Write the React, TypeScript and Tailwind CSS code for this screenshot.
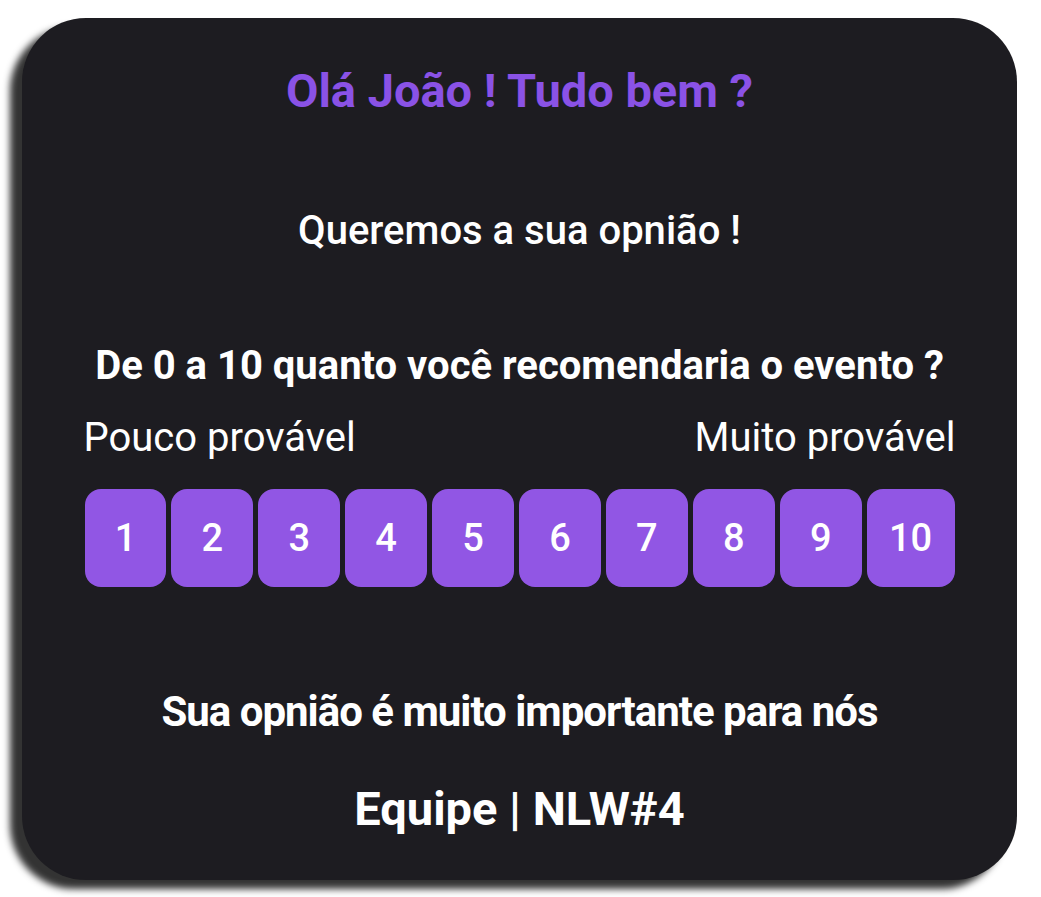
export default function App() {
  const nums = [1, 2, 3, 4, 5, 6, 7, 8, 9, 10];
  return (
    <div className="w-[1041px] h-[897px] bg-white pt-[18px] pl-[22px]" style={{ fontFamily: "Roboto, 'Liberation Sans', sans-serif" }}>
      <div className="w-[995px] h-[862px] bg-[#1d1c21] rounded-[64px] shadow-[-12px_9px_7px_#333] flex flex-col items-center text-white">
        <h1 className="mt-[45px] text-[47px] leading-[56px] font-bold text-[#8a52e6]">Olá João ! Tudo bem ?</h1>
        <p className="mt-[84px] text-[40px] leading-[56px] font-medium">Queremos a sua opnião !</p>
        <p className="mt-[79px] text-[40px] leading-[56px] font-bold">De 0 a 10 quanto você recomendaria o evento ?</p>
        <div className="mt-[16px] w-[872px] flex justify-between text-[40px] leading-[56px] font-normal">
          <span>Pouco provável</span>
          <span>Muito provável</span>
        </div>
        <div className="mt-[23px] w-[870px] flex gap-[5px]">
          {nums.map((n) => (
            <button
              key={n}
              className={`${n === 10 ? "w-[88px]" : "w-[82px]"} h-[98px] rounded-[16px] bg-[#9156e4] text-white text-[38px] font-medium flex items-center justify-center`}
            >
              {n}
            </button>
          ))}
        </div>
        <p className="mt-[97px] text-[42px] leading-[56px] font-bold tracking-[-1px]">Sua opnião é muito importante para nós</p>
        <p className="mt-[41px] text-[47px] leading-[56px] font-bold">Equipe | NLW#4</p>
      </div>
    </div>
  );
}
